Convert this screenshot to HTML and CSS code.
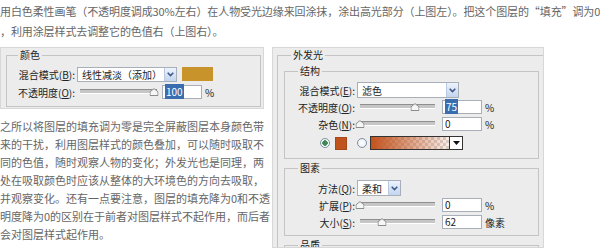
FILE: index.html
```html
<!DOCTYPE html>
<html lang="zh-CN">
  <head>
    <meta charset="UTF-8" />
    <meta name="viewport" content="width=device-width, initial-scale=1.0" />
    <title>填充与外发光</title>
    <link rel="stylesheet" href="styles.css">
  </head>
  <body>
    <div class="intro">
      <p>用白色柔性画笔（不透明度调成30%左右）在人物受光边缘来回涂抹，涂出高光部分（上图左）。把这个图层的“填充”调为0</p>
      <p>，利用涂层样式去调整它的色值右（上图右）。</p>
    </div>

    <div class="content">
      <div class="col-left">
        <div class="panel panel-color">
          <fieldset class="group group-color">
            <legend>颜色</legend>
            <div class="row">
              <label class="lbl">混合模式(<u>B</u>):</label>
              <div class="select select-mode">
                <span class="select-val">线性减淡（添加）</span>
                <span class="drop"><svg width="7" height="5" viewBox="0 0 7 5"><path d="M0.7 0.7 L3.5 3.6 L6.3 0.7" fill="none" stroke="#3b5688" stroke-width="1.5"/></svg></span>
              </div>
              <span class="swatch swatch-gold"></span>
            </div>
            <div class="row row-next">
              <label class="lbl">不透明度(<u>O</u>):</label>
              <div class="slider slider-short">
                <span class="thumb" style="left: 96%"><svg width="9" height="8" viewBox="0 0 9 8"><path d="M0.5 7.5 V3.8 L4.5 0.6 L8.5 3.8 V7.5 Z" fill="#f6f6f6" stroke="#8c8c8c"/></svg></span>
              </div>
              <span class="num num-left"><span class="sel">100</span></span>
              <span class="unit">%</span>
            </div>
          </fieldset>
        </div>

        <p class="body-text">
          之所以将图层的填充调为零是完全屏蔽图层本身颜色带<br>
          来的干扰，利用图层样式的颜色叠加，可以随时吸取不<br>
          同的色值，随时观察人物的变化；外发光也是同理，两<br>
          处在吸取颜色时应该从整体的大环境色的方向去吸取，<br>
          并观察变化。还有一点要注意，图层的填充降为0和不透<br>
          明度降为0的区别在于前者对图层样式不起作用，而后者<br>
          会对图层样式起作用。
        </p>
      </div>

      <div class="panel panel-glow">
        <fieldset class="group group-outer">
          <legend>外发光</legend>

          <fieldset class="group group-inner group-structure">
            <legend>结构</legend>
            <div class="row">
              <label class="lbl">混合模式(<u>E</u>):</label>
              <div class="select select-blend">
                <span class="select-val">滤色</span>
                <span class="drop"><svg width="7" height="5" viewBox="0 0 7 5"><path d="M0.7 0.7 L3.5 3.6 L6.3 0.7" fill="none" stroke="#3b5688" stroke-width="1.5"/></svg></span>
              </div>
            </div>
            <div class="row row-next">
              <label class="lbl">不透明度(<u>O</u>):</label>
              <div class="slider">
                <span class="thumb" style="left: 73%"><svg width="9" height="8" viewBox="0 0 9 8"><path d="M0.5 7.5 V3.8 L4.5 0.6 L8.5 3.8 V7.5 Z" fill="#f6f6f6" stroke="#8c8c8c"/></svg></span>
              </div>
              <span class="num"><span class="sel">75</span></span>
              <span class="unit">%</span>
            </div>
            <div class="row row-next">
              <label class="lbl">杂色(<u>N</u>):</label>
              <div class="slider">
                <span class="thumb" style="left: 0%"><svg width="9" height="8" viewBox="0 0 9 8"><path d="M0.5 7.5 V3.8 L4.5 0.6 L8.5 3.8 V7.5 Z" fill="#f6f6f6" stroke="#8c8c8c"/></svg></span>
              </div>
              <span class="num">0</span>
              <span class="unit">%</span>
            </div>
            <div class="row row-fill">
              <span class="radio checked"></span>
              <span class="swatch swatch-rust"></span>
              <span class="radio radio-grad"></span>
              <span class="gradient">
                <span class="grad-drop"><svg width="7" height="4" viewBox="0 0 7 4"><path d="M0 0 H7 L3.5 4 Z" fill="#111"/></svg></span>
              </span>
            </div>
          </fieldset>

          <fieldset class="group group-inner group-elements">
            <legend>图素</legend>
            <div class="row">
              <label class="lbl">方法(<u>Q</u>):</label>
              <div class="select select-method">
                <span class="select-val">柔和</span>
                <span class="drop"><svg width="7" height="5" viewBox="0 0 7 5"><path d="M0.7 0.7 L3.5 3.6 L6.3 0.7" fill="none" stroke="#3b5688" stroke-width="1.5"/></svg></span>
              </div>
            </div>
            <div class="row row-next">
              <label class="lbl">扩展(<u>P</u>):</label>
              <div class="slider">
                <span class="thumb" style="left: 0%"><svg width="9" height="8" viewBox="0 0 9 8"><path d="M0.5 7.5 V3.8 L4.5 0.6 L8.5 3.8 V7.5 Z" fill="#f6f6f6" stroke="#8c8c8c"/></svg></span>
              </div>
              <span class="num">0</span>
              <span class="unit">%</span>
            </div>
            <div class="row row-next">
              <label class="lbl">大小(<u>S</u>):</label>
              <div class="slider">
                <span class="thumb" style="left: 29%"><svg width="9" height="8" viewBox="0 0 9 8"><path d="M0.5 7.5 V3.8 L4.5 0.6 L8.5 3.8 V7.5 Z" fill="#f6f6f6" stroke="#8c8c8c"/></svg></span>
              </div>
              <span class="num">62</span>
              <span class="unit">像素</span>
            </div>
          </fieldset>

          <fieldset class="group group-inner group-quality">
            <legend>品质</legend>
          </fieldset>
        </fieldset>
      </div>
    </div>
  </body>
</html>
```

FILE: styles.css
```css
* {
  box-sizing: border-box;
  margin: 0;
  padding: 0;
}

body {
  width: 600px;
  height: 251px;
  overflow: hidden;
  background-color: #fff;
  color: #666;
  font-family: "Noto Sans CJK SC", "Noto Sans", sans-serif;
}

.intro {
  padding-top: 1px;
  font-size: 11px;
  line-height: 20px;
  letter-spacing: -0.1px;
  white-space: nowrap;
  overflow: hidden;
}

.content {
  display: flex;
  gap: 8px;
  margin-top: 6px;
}

.col-left {
  width: 264px;
  flex-shrink: 0;
}

/* dialog panels */

.panel {
  background-color: #ececec;
  border: 1px solid #d8d8d8;
  overflow: hidden;
  color: #222;
  font-size: 10px;
}

.panel-color {
  height: 62px;
}

.panel-glow {
  width: 272px;
  height: 201px;
  flex-shrink: 0;
}

fieldset.group {
  border: 1px solid #c4c4c4;
  min-width: 0;
}

fieldset.group legend {
  padding: 0 2px;
  font-size: 10px;
  line-height: 14px;
  color: #222;
}

.group-color {
  margin: 0 2px 0 5px;
  padding: 4px 0 6px;
}

.group-color legend {
  margin-left: 11px;
}

.group-outer {
  width: 290px;
  margin-left: 4px;
  padding: 2px 0 0 6px;
}

.group-outer > legend {
  margin-left: 7px;
}

.group-inner {
  width: 255px;
}

.group-inner > legend {
  margin-left: 13px;
}

.group-structure {
  padding: 4px 0 7px;
}

.group-elements {
  margin-top: 2px;
  padding: 5px 0 5px;
}

.group-quality {
  margin-top: 2px;
  height: 20px;
}

/* rows and controls */

.row {
  display: flex;
  align-items: center;
  height: 16px;
  white-space: nowrap;
}

.row-next {
  margin-top: 1px;
}

.row-fill {
  margin-top: 3px;
}

.group-color .row-next {
  margin-top: 2px;
}

.lbl {
  width: 70px;
  flex-shrink: 0;
  text-align: right;
}

.group-color .lbl {
  width: 68px;
}

.select {
  display: flex;
  align-items: center;
  height: 16px;
  margin-left: 2px;
  border: 1px solid #a9afb8;
  background-color: #fff;
}

.select-mode {
  width: 100px;
  height: 15px;
}

.select-blend {
  width: 102px;
}

.select-method {
  width: 44px;
}

.select-val {
  flex: 1;
  padding-left: 4px;
}

.drop {
  display: flex;
  align-items: center;
  justify-content: center;
  width: 12px;
  height: 100%;
  border-left: 1px solid #b8c9e3;
  background: linear-gradient(#edf3fc, #c3d5ef);
}

.swatch {
  display: inline-block;
  flex-shrink: 0;
}

.swatch-gold {
  width: 31px;
  height: 14px;
  margin-left: 5px;
  background-color: #c9932c;
}

.swatch-rust {
  width: 12px;
  height: 13px;
  margin-left: 5px;
  background-color: #c0531d;
  border: 1px solid #a9461a;
}

.slider {
  position: relative;
  width: 75px;
  height: 16px;
  margin-left: 5px;
  flex-shrink: 0;
}

.slider::before {
  content: "";
  position: absolute;
  left: 0;
  right: 0;
  top: 5px;
  height: 3px;
  border-top: 1px solid #8f8f8f;
  border-bottom: 1px solid #fff;
  background-color: #c6c6c6;
}

.slider-short {
  width: 77px;
}

.thumb {
  position: absolute;
  top: 4px;
  transform: translateX(-50%);
  line-height: 0;
}

.thumb svg {
  display: block;
}

.num {
  width: 40px;
  height: 14px;
  margin-left: 7px;
  padding-left: 2px;
  border: 1px solid #a9afb8;
  background-color: #fff;
  line-height: 12px;
  flex-shrink: 0;
}

.num-left {
  margin-left: 5px;
}

.sel {
  padding: 0 1px;
  background-color: #3a6db0;
  color: #fff;
}

.unit {
  margin-left: 3px;
}

.radio {
  width: 10px;
  height: 10px;
  margin-left: 35px;
  border: 1px solid #7f90a4;
  border-radius: 50%;
  background: radial-gradient(#fff, #e4e8ee);
  flex-shrink: 0;
}

.radio.checked {
  background: radial-gradient(#3f8a52 0 2.5px, #fff 3px, #e4e8ee);
}

.radio-grad {
  margin-left: 10px;
}

.gradient {
  display: flex;
  justify-content: flex-end;
  width: 93px;
  height: 14px;
  margin-left: 3px;
  border: 1px solid #333;
  background:
    linear-gradient(to right, #c2521d, rgba(194, 82, 29, 0) 95%),
    repeating-conic-gradient(#fff 0 25%, #d9d9d9 0 50%) 0 0 / 6px 6px;
}

.grad-drop {
  display: flex;
  align-items: center;
  justify-content: center;
  width: 13px;
  height: 100%;
  border-left: 1px solid #333;
  background-color: #fff;
}

/* article text */

.body-text {
  margin-top: 8px;
  font-size: 11px;
  line-height: 18px;
  white-space: nowrap;
  color: #666;
}
```
